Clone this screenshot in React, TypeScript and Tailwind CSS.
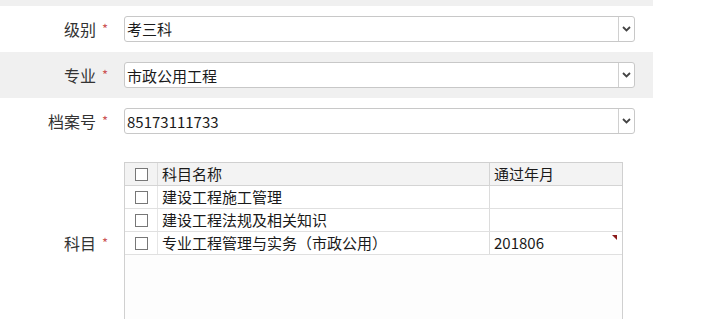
import React from "react";

const font = { fontFamily: '"Microsoft YaHei", "Noto Sans CJK SC", "Noto Sans", sans-serif' };

const Select = ({ value }: { value: string }) => (
  <div className="flex h-[26px] w-[511px] items-center rounded-[3px] border border-[#c8c8c8] bg-white">
    <span className="flex-1 pl-[2px] text-[15px] leading-none text-[#1a1a1a]">{value}</span>
    <div className="flex h-full w-[16px] items-center justify-center border-l border-[#d0d0d0]">
      <svg width="9" height="6" viewBox="0 0 9 6">
        <path d="M1 1 L4.5 4.5 L8 1" stroke="#444" strokeWidth="1.8" fill="none" />
      </svg>
    </div>
  </div>
);

const Label = ({ text }: { text: string }) => (
  <div className="flex w-[124px] shrink-0 items-center justify-end pr-[16px] text-[16px] text-[#333]">
    <span>{text}</span>
    <span className="ml-[6px] text-[13px] text-[#cc5555]">*</span>
  </div>
);

const Box = () => <div className="h-[13px] w-[13px] border border-[#777] bg-white" />;

const subjects = [
  { name: "建设工程施工管理", date: "" },
  { name: "建设工程法规及相关知识", date: "" },
  { name: "专业工程管理与实务（市政公用）", date: "201806" },
];

export default function App() {
  return (
    <div className="h-[319px] w-[713px] overflow-hidden bg-white" style={font}>
      <div className="w-[653px]">
        <div className="h-[6px] bg-[#f0f0f0]" />
        <div className="flex h-[46px] items-center pb-[1px]">
          <Label text="级别" />
          <Select value="考三科" />
        </div>
        <div className="flex h-[46px] items-center bg-[#f0f0f0]">
          <Label text="专业" />
          <Select value="市政公用工程" />
        </div>
        <div className="flex h-[46px] items-center">
          <Label text="档案号" />
          <Select value="85173111733" />
        </div>
        <div className="flex pt-[18px]">
          <div className="flex w-[124px] shrink-0 flex-col">
            <div className="h-[69px]" />
            <div className="flex h-[23px] items-center justify-end pr-[16px] text-[16px] text-[#333]">
              <span>科目</span>
              <span className="ml-[6px] text-[13px] text-[#cc5555]">*</span>
            </div>
          </div>
          <div className="flex h-[200px] w-[499px] flex-col border-x border-t border-[#d0d0d0] bg-[#fdfdfd] text-[15px] text-[#1a1a1a]">
            <div className="flex h-[23px] border-b border-[#d4d4d4] bg-[#f3f3f3]">
              <div className="flex w-[33px] items-center justify-center border-r border-[#dcdcdc]">
                <Box />
              </div>
              <div className="flex w-[332px] items-center border-r border-[#d4d4d4] pl-[4px]">科目名称</div>
              <div className="flex flex-1 items-center pl-[4px]">通过年月</div>
            </div>
            {subjects.map((s) => (
              <div key={s.name} className="flex h-[23px] border-b border-[#e0e0e0] bg-white">
                <div className="flex w-[33px] items-center justify-center border-r border-[#e6e6e6]">
                  <Box />
                </div>
                <div className="flex w-[332px] items-center border-r border-[#dcdcdc] pl-[4px]">{s.name}</div>
                <div className="relative flex flex-1 items-center pl-[4px]">
                  {s.date}
                  {s.date && (
                    <div className="absolute right-[5px] top-[3px] h-0 w-0 border-l-[5px] border-t-[5px] border-l-transparent border-t-[#8b1a1a]" />
                  )}
                </div>
              </div>
            ))}
          </div>
        </div>
      </div>
    </div>
  );
}
